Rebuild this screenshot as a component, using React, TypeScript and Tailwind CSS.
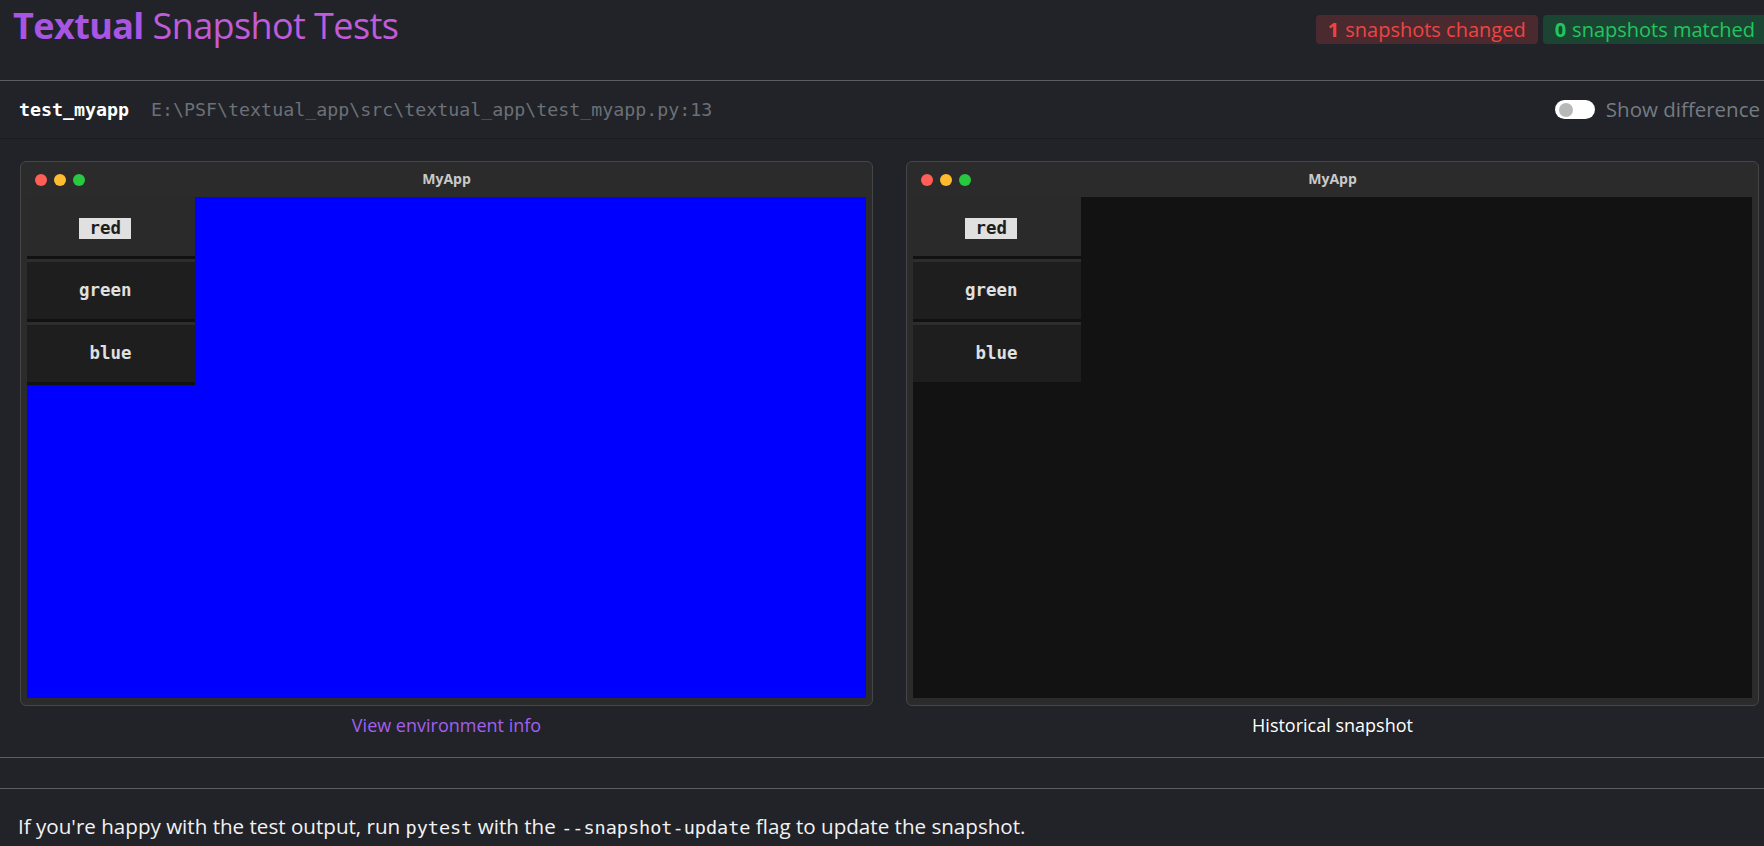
import React from 'react'

const sans = "font-['Open_Sans',sans-serif]"
const mono = "font-['DejaVu_Sans_Mono',monospace]"

const buttons = [
  { label: ' red ', active: true },
  { label: 'green', active: false },
  { label: ' blue', active: false },
]

function SnapshotWindow(props: { screen: string }) {
  return (
    <div className="flex h-[545px] flex-col rounded-[6px] border border-[#464646] bg-[#2b2b2b]">
      <div className="grid h-[35px] shrink-0 grid-cols-[1fr_auto_1fr] items-center">
        <div className="flex items-center gap-[7px] pl-[14px]">
          <span className="h-[12px] w-[12px] rounded-full bg-[#ff5f57]" />
          <span className="h-[12px] w-[12px] rounded-full bg-[#febc2e]" />
          <span className="h-[12px] w-[12px] rounded-full bg-[#28c840]" />
        </div>
        <span className={`${sans} mb-[2px] text-[14px] font-bold text-[#c9c9c9]`}>MyApp</span>
        <div />
      </div>
      <div className={`mx-[6px] mb-[7px] flex-1 ${props.screen}`}>
        <div className="flex w-[168px] flex-col">
          {buttons.map((b, i) => (
            <div
              key={b.label}
              className={`flex items-center border-b-[3px] border-t-[3px] border-b-[#111111] pl-[52px] ${
                i === 0 ? 'h-[62px] border-t-[#2a2a2a] bg-[#2a2a2a]' : 'h-[63px] border-t-[#2d2d2d] bg-[#1e1e1e]'
              }`}
            >
              <span
                className={`${mono} whitespace-pre text-[17.4px] font-bold leading-[21px] ${
                  b.active ? 'bg-[#e0e0e0] text-[#1e1e1e]' : 'text-[#e0e0e0]'
                }`}
              >
                {b.label}
              </span>
            </div>
          ))}
        </div>
      </div>
    </div>
  )
}

export default function App() {
  return (
    <div className={`${sans} min-h-screen overflow-hidden bg-[#212328]`}>
      <div className="flex h-[80px] items-start justify-between">
        <h1 className="ml-[13px] mt-[-1px] text-[36px] leading-normal tracking-[-0.6px]">
          <span className="font-bold text-[#a855e4]">Textual</span>{' '}
          <span className="text-[#c05bd9]">Snapshot Tests</span>
        </h1>
        <div className="-mr-[3px] mt-[15px] flex gap-[5px]">
          <span className="flex h-[29px] items-center rounded-[4px] bg-[#4a2a2e] px-[12px] text-[20px] text-[#ef4444]">
            <b className="mr-[6px]">1</b>snapshots changed
          </span>
          <span className="flex h-[29px] items-center rounded-[4px] bg-[#1b4532] px-[12px] text-[20px] text-[#22c55e]">
            <b className="mr-[6px]">0</b>snapshots matched
          </span>
        </div>
      </div>

      <div className="border-y border-[#5c5e62]">
        <div className="flex h-[58px] items-center justify-between border-b border-[#1a1c1f] pl-[19px] pr-[4px]">
          <div className="flex items-center gap-[22px]">
            <span className={`${mono} text-[18.3px] font-bold text-white`}>test_myapp</span>
            <span className={`${mono} text-[18.3px] text-[#6c7077]`}>
              E:\PSF\textual_app\src\textual_app\test_myapp.py:13
            </span>
          </div>
          <div className="flex items-center gap-[11px]">
            <span className="flex h-[19px] w-[40px] items-center rounded-full bg-white pl-[4px]">
              <span className="h-[14px] w-[14px] rounded-full bg-[#b8b8b8]" />
            </span>
            <span className="text-[20.5px] text-[#767b83]">Show difference</span>
          </div>
        </div>

        <div className="grid grid-cols-[853px_853px] gap-[33px] pb-[19px] pl-[20px] pt-[22px]">
          <div className="flex flex-col">
            <SnapshotWindow screen="bg-[#0000ff]" />
            <span className="mt-[6px] text-center text-[18px] leading-[26px] text-[#a35ff0]">
              View environment info
            </span>
          </div>
          <div className="flex flex-col">
            <SnapshotWindow screen="bg-[#121212]" />
            <span className="mt-[6px] text-center text-[18px] leading-[26px] text-white">
              Historical snapshot
            </span>
          </div>
        </div>
      </div>

      <div className="mt-[30px] border-t border-[#5c5e62] pl-[18px] pt-[23px]">
        <p className="text-[20.6px] leading-[28px] text-[#f2f2f2]">
          If you're happy with the test output, run <code className={`${mono} text-[18.5px]`}>pytest</code> with the{' '}
          <code className={`${mono} text-[18.5px]`}>--snapshot-update</code> flag to update the snapshot.
        </p>
      </div>
    </div>
  )
}
